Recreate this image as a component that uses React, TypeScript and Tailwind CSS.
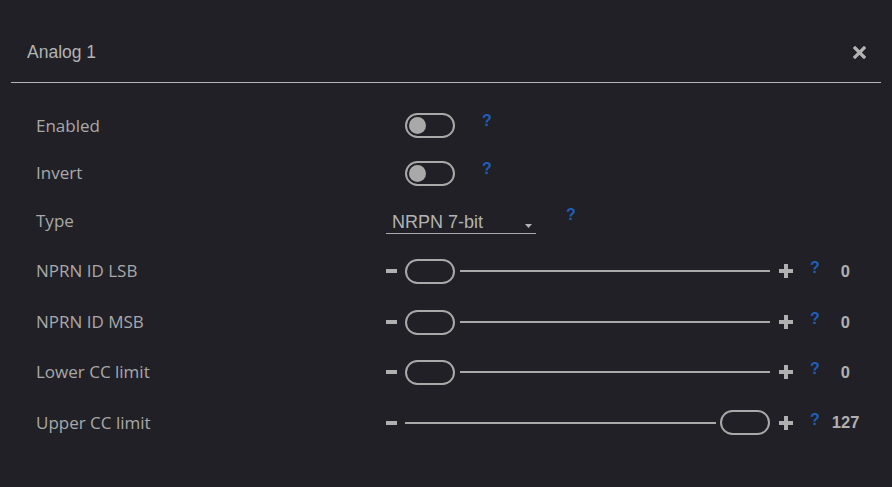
import React from 'react';

const labelFont = { fontFamily: '"Open Sans", "Noto Sans", sans-serif' };
const arial = { fontFamily: '"Liberation Sans", Arial, sans-serif' };

const Help: React.FC<{ className?: string }> = ({ className = '' }) => (
  <span className={`text-[#1f5fb8] font-bold text-[16px] leading-none ${className}`} style={arial}>
    ?
  </span>
);

const Toggle: React.FC = () => (
  <div className="w-[50px] h-[25px] rounded-full border-2 border-[#a9a9a9] flex items-center px-[2px]">
    <div className="w-[17px] h-[17px] rounded-full bg-[#a9a9a9]" />
  </div>
);

const Thumb: React.FC = () => <div className="w-[50px] h-[25px] rounded-full border-2 border-[#a9a9a9] shrink-0" />;

const Slider: React.FC<{ value: number; max?: boolean }> = ({ value, max }) => (
  <div className="flex items-center">
    <div className="w-[11px] h-[4px] bg-[#b0b0b0] ml-[386px]" />
    <div className="flex items-center w-[365px] ml-[8px]">
      {max ? (
        <>
          <div className="flex-1 h-[2px] bg-[#a9a9a9] mr-[4px]" />
          <Thumb />
        </>
      ) : (
        <>
          <Thumb />
          <div className="flex-1 h-[2px] bg-[#a9a9a9] ml-[5px]" />
        </>
      )}
    </div>
    <svg width="14" height="14" viewBox="0 0 14 14" className="ml-[9px]">
      <rect x="0" y="5" width="14" height="4" fill="#b0b0b0" />
      <rect x="5" y="0" width="4" height="14" fill="#b0b0b0" />
    </svg>
    <Help className="ml-[17px] -mt-[6px]" />
    <span className={`text-[#b0b0b0] text-[16.5px] font-bold ${max ? 'ml-[12px]' : 'ml-[21px]'}`} style={arial}>
      {value}
    </span>
  </div>
);

const Row: React.FC<{ label: string; h: string; children: React.ReactNode }> = ({ label, h, children }) => (
  <div className={`relative flex items-center ${h}`}>
    <span className="absolute left-[36px] text-[17px] text-[#a9a9a9]" style={labelFont}>
      {label}
    </span>
    {children}
  </div>
);

export default function App() {
  return (
    <div className="w-[892px] h-[487px] bg-[#202026] overflow-hidden">
      <div className="h-[82px] flex items-center justify-between pt-[22px] pl-[27px] pr-[26px]">
        <span className="text-[17.5px] text-[#b3b3b3]" style={arial}>
          Analog 1
        </span>
        <svg width="13" height="13" viewBox="0 0 13 13">
          <path d="M2 2 L11 11 M11 2 L2 11" stroke="#b3b3b3" strokeWidth="3.2" strokeLinecap="square" />
        </svg>
      </div>
      <div className="ml-[11px] mr-[11px] h-[1px] bg-[#b4b4b4]" />
      <div className="pt-[19px]">
        <Row label="Enabled" h="h-[47px]">
          <div className="ml-[405px]"><Toggle /></div>
          <Help className="ml-[27px] -mt-[9px]" />
        </Row>
        <Row label="Invert" h="h-[48px]">
          <div className="ml-[405px]"><Toggle /></div>
          <Help className="ml-[27px] -mt-[9px]" />
        </Row>
        <Row label="Type" h="h-[48px]">
          <div className="ml-[386px] w-[150px] border-b border-[#a9a9a9] flex items-center justify-between pl-[6px] pr-[4px] h-[23px] mt-[2px]">
            <span className="text-[18px] text-[#b3b3b3] leading-none" style={arial}>
              NRPN 7-bit
            </span>
            <svg width="7" height="4" viewBox="0 0 7 4" className="mt-[8px]">
              <path d="M0 0 L7 0 L3.5 4 Z" fill="#b3b3b3" />
            </svg>
          </div>
          <Help className="ml-[30px] -mt-[12px]" />
        </Row>
        <Row label="NPRN ID LSB" h="h-[52px]">
          <Slider value={0} />
        </Row>
        <Row label="NPRN ID MSB" h="h-[50px]">
          <Slider value={0} />
        </Row>
        <Row label="Lower CC limit" h="h-[50px]">
          <Slider value={0} />
        </Row>
        <Row label="Upper CC limit" h="h-[51px]">
          <Slider value={127} max />
        </Row>
      </div>
    </div>
  );
}
